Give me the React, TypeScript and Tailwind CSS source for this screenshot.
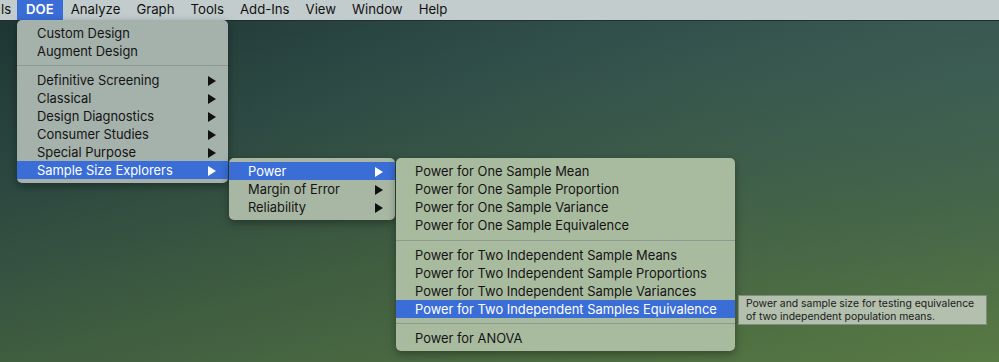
import React from "react";

const Arrow = ({ white }: { white?: boolean }) => (
  <svg width="8" height="10" viewBox="0 0 8 10" className="shrink-0">
    <polygon points="0,0 8,5 0,10" fill={white ? "#ffffff" : "#111111"} />
  </svg>
);

type Item = { label: string; sub?: boolean; active?: boolean } | "sep";

const Row = ({ label, sub, active, pl }: { label: string; sub?: boolean; active?: boolean; pl: string }) => (
  <div
    className={`flex h-[18px] items-center justify-between pr-[12px] pt-[1px] ${pl} ${
      active ? "bg-[#3a6dd6] text-white" : "text-[#141414]"
    }`}
  >
    <span className="whitespace-nowrap">{label}</span>
    {sub && <Arrow white={active} />}
  </div>
);

const Menu = ({
  items,
  className,
  pl,
  seps,
}: {
  items: Item[];
  className: string;
  pl: string;
  seps?: string[];
}) => {
  let s = 0;
  return (
    <div
      className={`absolute flex flex-col rounded-[5px] py-[4px] shadow-[0_3px_8px_rgba(0,0,0,0.35)] ${className}`}
    >
      {items.map((it, i) => {
        if (it === "sep") {
          const h = seps ? seps[s++] : "h-[11px]";
          return (
            <div key={i} className={`flex ${h} items-center`}>
              <div className="h-px w-full bg-[#8d9a92]" />
            </div>
          );
        }
        return <Row key={i} {...it} pl={pl} />;
      })}
    </div>
  );
};

export default function App() {
  const menuBar = ["Analyze", "Graph", "Tools", "Add-Ins", "View", "Window", "Help"];
  return (
    <div className="relative h-[362px] w-[999px] overflow-hidden bg-[linear-gradient(165deg,#1c3432_0%,#2c4841_30%,#415f40_60%,#587a44_100%)] text-[12.9px] font-['Inter','Liberation_Sans',sans-serif] antialiased">
      <div className="pointer-events-none absolute inset-0 bg-[radial-gradient(ellipse_at_100%_20%,rgba(60,95,100,0.55),transparent_60%)]" />
      {/* menu bar */}
      <div className="relative flex h-[21px] items-center border-b border-[#203030] bg-[#c2cccc] text-[13.2px] text-[#111]">
        <span className="w-[17px] whitespace-nowrap pl-[1px]">ls</span>
        <span className="flex h-[20px] items-center bg-[#3a6dd6] px-[9px] font-semibold text-white">DOE</span>
        {menuBar.map((m) => (
          <span key={m} className="px-[8px]">
            {m}
          </span>
        ))}
      </div>

      <Menu
        className="left-[17px] top-[20px] w-[211px] bg-[#a5b1ab]"
        pl="pl-[20px]"
        items={[
          { label: "Custom Design" },
          { label: "Augment Design" },
          "sep",
          { label: "Definitive Screening", sub: true },
          { label: "Classical", sub: true },
          { label: "Design Diagnostics", sub: true },
          { label: "Consumer Studies", sub: true },
          { label: "Special Purpose", sub: true },
          { label: "Sample Size Explorers", sub: true, active: true },
        ]}
      />

      <Menu
        className="left-[229px] top-[158px] w-[166px] bg-[#a8b7a3]"
        pl="pl-[19px]"
        items={[
          { label: "Power", sub: true, active: true },
          { label: "Margin of Error", sub: true },
          { label: "Reliability", sub: true },
        ]}
      />

      <Menu
        className="left-[396px] top-[158px] w-[339px] bg-[#a9bb9f]"
        pl="pl-[19px]"
        seps={["h-[12px]", "h-[11px]"]}
        items={[
          { label: "Power for One Sample Mean" },
          { label: "Power for One Sample Proportion" },
          { label: "Power for One Sample Variance" },
          { label: "Power for One Sample Equivalence" },
          "sep",
          { label: "Power for Two Independent Sample Means" },
          { label: "Power for Two Independent Sample Proportions" },
          { label: "Power for Two Independent Sample Variances" },
          { label: "Power for Two Independent Samples Equivalence", active: true },
          "sep",
          { label: "Power for ANOVA" },
        ]}
      />

      {/* tooltip */}
      <div className="absolute left-[738px] top-[295px] h-[30px] w-[249px] whitespace-nowrap border border-[#7f8c80] bg-[#b3c0ad] px-[7px] pt-[1px] text-[10.4px] leading-[13px] text-[#1a1a1a]">
        <div>Power and sample size for testing equivalence</div>
        <div>of two independent population means.</div>
      </div>
    </div>
  );
}
